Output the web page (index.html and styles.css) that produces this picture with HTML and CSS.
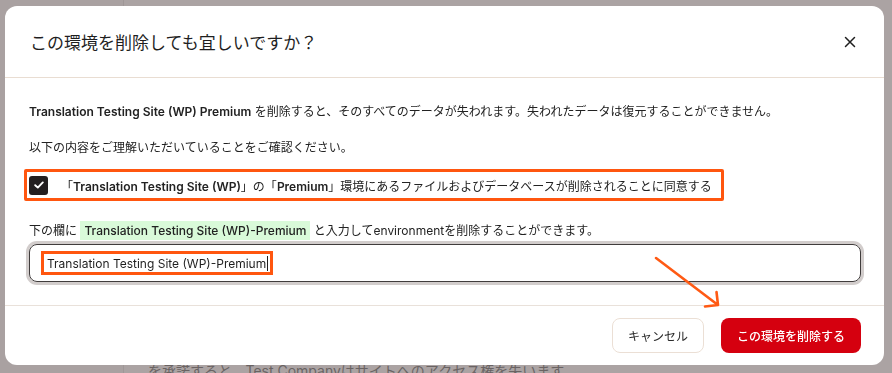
FILE: index.html
```html
<!DOCTYPE html>
<html lang="ja">
<head>
    <meta charset="UTF-8">
    <meta name="viewport" content="width=device-width, initial-scale=1.0">
    <title>環境の削除</title>
    <link rel="stylesheet" href="styles.css">
</head>
<body>
    <div class="app">
        <aside class="side"></aside>
        <main class="main">
            <p class="main-note">を承諾すると、Test Companyはサイトへのアクセス権を失います</p>
        </main>
    </div>

    <div class="overlay">
        <div class="modal">
            <div class="modal-header">
                <h2>この環境を削除しても宜しいですか？</h2>
                <button class="close-button" aria-label="閉じる">
                    <svg width="12" height="12" viewBox="0 0 12 12"><path d="M1.5 1.5l9 9M10.5 1.5l-9 9" stroke="#1f1f1f" stroke-width="1.5" stroke-linecap="round"/></svg>
                </button>
            </div>

            <div class="modal-body">
                <p class="text-line"><strong>Translation Testing Site (WP) Premium</strong> を削除すると、そのすべてのデータが失われます。失われたデータは復元することができません。</p>
                <p class="text-line">以下の内容をご理解いただいていることをご確認ください。</p>

                <label class="confirm-row">
                    <span class="checkbox">
                        <svg width="10" height="8" viewBox="0 0 10 8"><path d="M1.2 4.2l2.6 2.4L8.8 1.4" stroke="#fff" stroke-width="1.9" fill="none" stroke-linecap="round" stroke-linejoin="round"/></svg>
                    </span>
                    <span class="confirm-text">「<strong>Translation Testing Site (WP)</strong>」の「<strong>Premium</strong>」環境にあるファイルおよびデータベースが削除されることに同意する</span>
                </label>

                <p class="text-line type-hint">下の欄に <code class="env-name">Translation Testing Site (WP)-Premium</code> と入力してenvironmentを削除することができます。</p>

                <div class="name-input">
                    <span class="typed">Translation Testing Site (WP)-Premium<span class="caret"></span></span>
                </div>
            </div>

            <div class="modal-footer">
                <button class="cancel-button">キャンセル</button>
                <button class="delete-button">この環境を削除する</button>
            </div>

            <svg class="pointer-arrow" width="892" height="373" viewBox="0 0 892 373">
                <path d="M656 258L718 305M705 306.5L718 305L716.5 292" stroke="#ff5a14" stroke-width="2.6" fill="none" stroke-linecap="round" stroke-linejoin="round"/>
            </svg>
        </div>
    </div>
</body>
</html>
```

FILE: styles.css
```css
* {
    box-sizing: border-box;
}

html, body {
    margin: 0;
    padding: 0;
    height: 373px;
    overflow: hidden;
}

body {
    font-family: Inter, "Noto Sans CJK JP", sans-serif;
    background-color: #aba3a3;
    color: #222;
}

.app {
    display: flex;
    height: 373px;
}

.side {
    width: 124px;
    flex-shrink: 0;
    background-color: #a9a1a1;
    border-right: 1px solid #9f9797;
}

.main {
    flex: 1;
    padding: 362px 0 0 24px;
}

.main-note {
    margin: 0;
    font-size: 14px;
    line-height: 18px;
    color: #6a6363;
    white-space: nowrap;
}

.overlay {
    position: fixed;
    inset: 0;
    padding: 6px 0 0 5px;
}

.modal {
    position: relative;
    width: 879px;
    height: 359px;
    background-color: white;
    border-radius: 12px;
    display: flex;
    flex-direction: column;
}

.modal-header {
    height: 72px;
    padding: 0 27px 0 25px;
    display: flex;
    align-items: center;
    justify-content: space-between;
    border-bottom: 1px solid #e9ddd2;
}

.modal-header h2 {
    margin: 0;
    font-size: 17px;
    font-weight: 400;
    color: #1f1f1f;
}

.close-button {
    border: none;
    background: none;
    padding: 0;
    width: 14px;
    height: 14px;
    display: flex;
    align-items: center;
    justify-content: center;
    cursor: pointer;
}

.modal-body {
    flex: 1;
    padding: 24px 23px 0 24px;
    border-bottom: 1px solid #e9e1da;
}

.text-line {
    margin: 0 0 16px;
    font-size: 12px;
    line-height: 20px;
    white-space: nowrap;
}

.text-line strong {
    font-weight: 600;
}

.confirm-row {
    display: flex;
    align-items: center;
    width: 700px;
    height: 32px;
    margin: -5px 0 0 -5px;
    padding: 0 0 0 2px;
    border: 3px solid #ff560f;
    border-radius: 2px;
    font-size: 12px;
    white-space: nowrap;
}

.checkbox {
    width: 19px;
    height: 19px;
    border-radius: 3px;
    background-color: #231f20;
    display: flex;
    align-items: center;
    justify-content: center;
    margin-right: 13px;
}

.confirm-text strong {
    font-weight: 600;
}

.type-hint {
    margin: 20px 0 3px;
}

.env-name {
    font-family: Inter, "Noto Sans CJK JP", sans-serif;
    font-size: 12px;
    font-weight: 500;
    background-color: #d9fad9;
    padding: 2px 4px;
}

.name-input {
    height: 38px;
    border: 1px solid #403c3c;
    border-radius: 8px;
    box-shadow: 0 0 0 3px #d2cdcc;
    display: flex;
    align-items: center;
    padding-left: 11px;
}

.typed {
    display: flex;
    align-items: center;
    height: 24px;
    padding: 0 2px 0 3px;
    border: 3px solid #ff560f;
    font-size: 12px;
    color: #1f1f1f;
    white-space: nowrap;
}

.caret {
    width: 1px;
    height: 15px;
    background-color: #1f1f1f;
    margin-left: 1px;
}

.modal-footer {
    height: 59px;
    padding: 0 23px;
    display: flex;
    align-items: center;
    justify-content: flex-end;
    gap: 17px;
}

button {
    font-family: Inter, "Noto Sans CJK JP", sans-serif;
    cursor: pointer;
}

.cancel-button {
    width: 92px;
    height: 35px;
    border: 1px solid #ebdfd5;
    border-radius: 8px;
    background-color: white;
    font-size: 12px;
    color: #2a2a2a;
}

.delete-button {
    width: 140px;
    height: 35px;
    border: none;
    border-radius: 8px;
    background-color: #d5000f;
    color: white;
    font-size: 12px;
    font-weight: 500;
}

.pointer-arrow {
    position: absolute;
    left: -5px;
    top: -6px;
    pointer-events: none;
}
```
